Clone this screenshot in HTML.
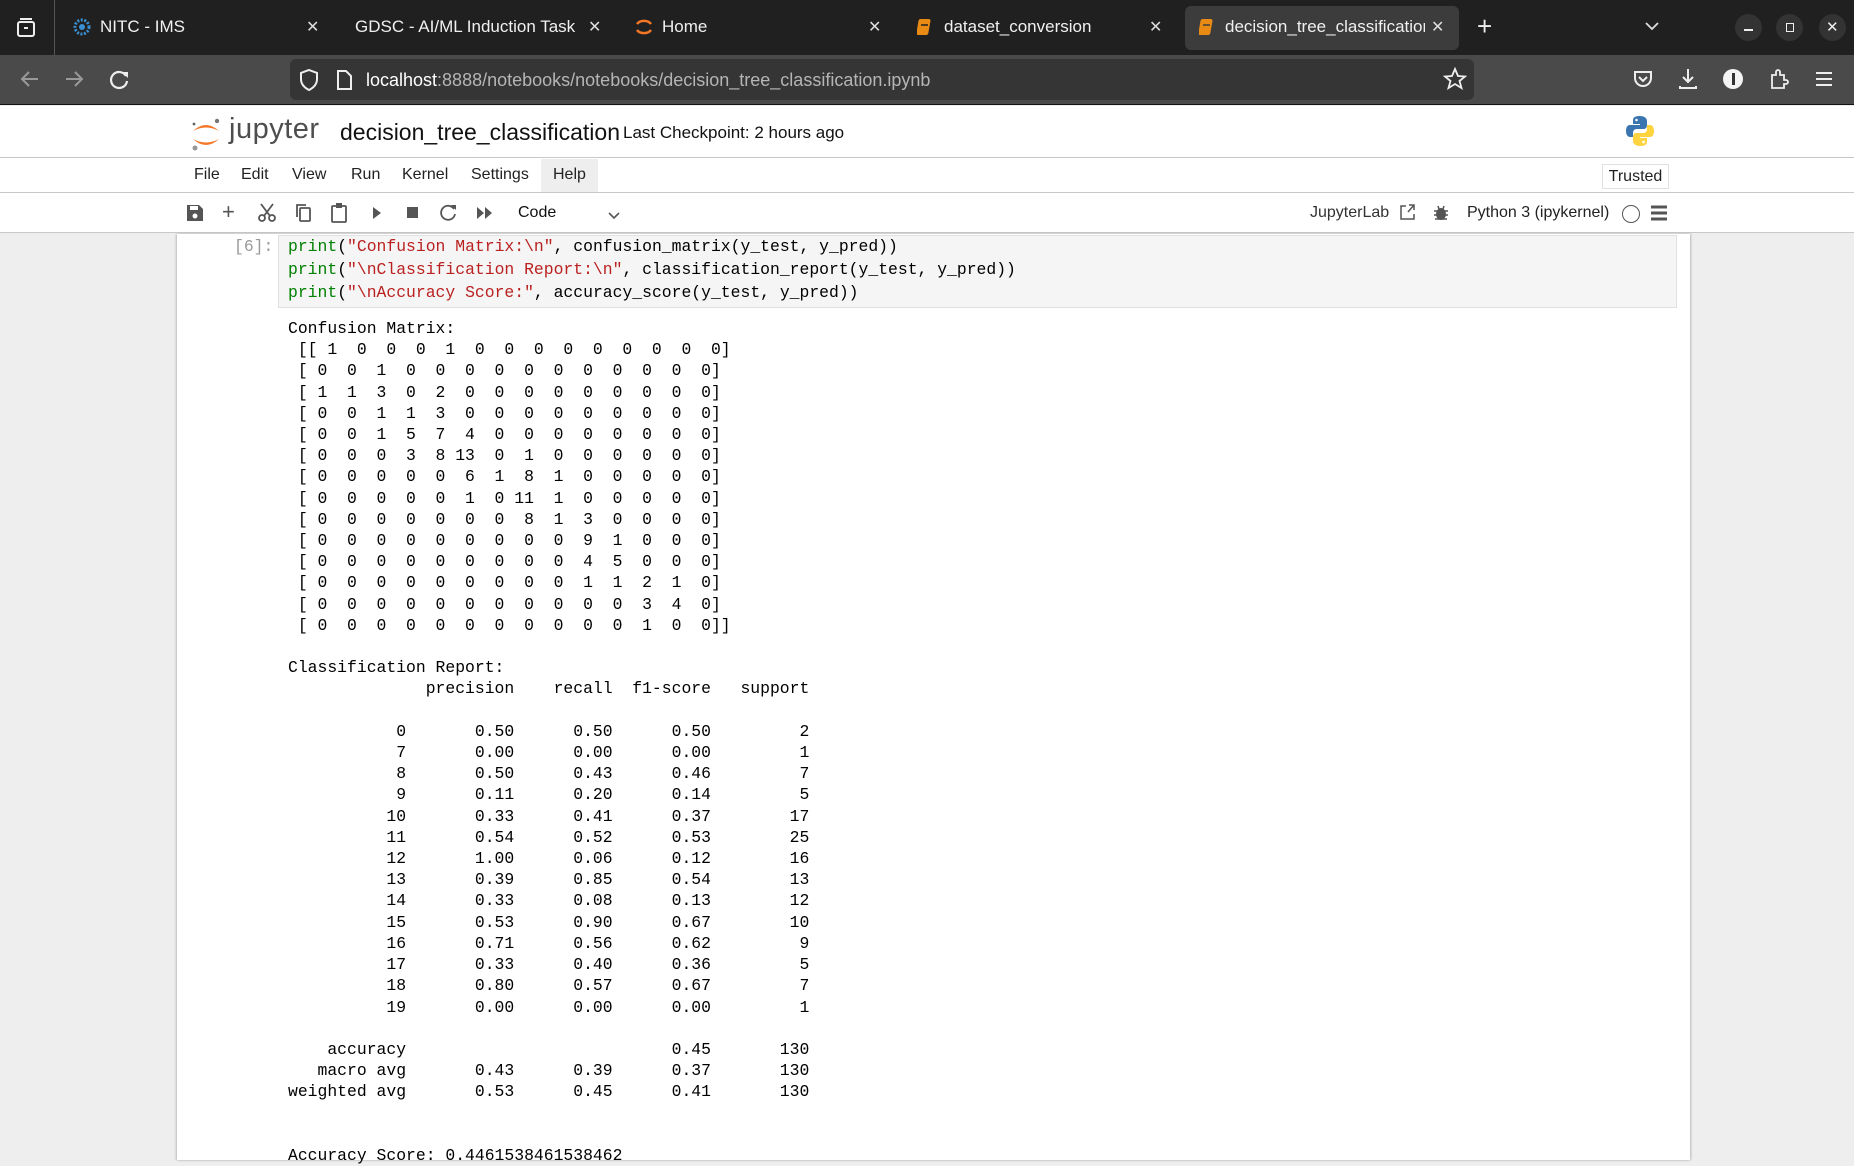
<!DOCTYPE html>
<html><head><meta charset="utf-8"><style>
*{margin:0;padding:0;box-sizing:border-box}
body{width:1854px;height:1160px;overflow:hidden;background:#eeeeee;font-family:"Liberation Sans",sans-serif;position:relative}
.a{position:absolute}
.tabbar{left:0;top:0;width:1854px;height:55px;background:#202020}
.tt{color:#f0f0f0;font-size:17px;top:17px;white-space:nowrap}
.cx{color:#ddd;font-size:16px;top:17px}
.nav{left:0;top:55px;width:1854px;height:50px;background:#4a4a4a;border-bottom:1px solid #111}
.url{left:290px;top:59px;width:1184px;height:41px;background:#353535;border-radius:6px}
.hdr{left:0;top:106px;width:1854px;height:52px;background:#fff;border-bottom:1px solid #c8c8c8}
.menu{left:0;top:158px;width:1854px;height:35px;background:#fff;border-bottom:1px solid #c8c8c8}
.mi{top:166px;font-size:16px;color:#222}
.tb{left:0;top:193px;width:1854px;height:40px;background:#fff;border-bottom:1px solid #c8c8c8}
.panel{left:177px;top:234px;width:1513px;height:926px;background:#fff;box-shadow:-1px 0 2px #bbb,1px 0 2px #bbb}
.mono{font-family:"Liberation Mono","DejaVu Sans Mono",monospace;font-size:16.4px;white-space:pre}
.g{color:#008000}.r{color:#ba2121}
</style></head><body>
<div class="a tabbar"></div>
<svg class="a" style="left:15px;top:17px" width="22" height="22" viewBox="0 0 22 22"><rect x="3" y="5" width="16" height="14" rx="2" fill="none" stroke="#eee" stroke-width="2"/><line x1="5" y1="2" x2="17" y2="2" stroke="#eee" stroke-width="2"/><rect x="9" y="10" width="4" height="2" fill="#eee"/></svg>
<div class="a" style="left:54px;top:0;width:1px;height:55px;background:#555"></div>
<svg class="a" style="left:72px;top:17px" width="20" height="20"><circle cx="10" cy="10" r="7" fill="none" stroke="#3a8fd0" stroke-width="3" stroke-dasharray="2 1.5"/><circle cx="10" cy="10" r="3" fill="#3a8fd0"/></svg>
<div class="a tt" style="left:100px">NITC - IMS</div><div class="a cx" style="left:306px">✕</div>
<div class="a tt" style="left:355px;width:228px;overflow:hidden">GDSC - AI/ML Induction Task</div><div class="a cx" style="left:588px">✕</div>
<svg class="a" style="left:634px;top:16px" width="20" height="22"><path d="M3 8 A8 6 0 0 1 17 8" fill="none" stroke="#f37726" stroke-width="2.5"/><path d="M3 14 A8 6 0 0 0 17 14" fill="none" stroke="#f37726" stroke-width="2.5"/></svg>
<div class="a tt" style="left:662px">Home</div><div class="a cx" style="left:868px">✕</div>
<svg class="a" style="left:917px;top:18px" width="16" height="18"><rect x="2" y="1" width="12" height="16" rx="2" fill="#e98a15" transform="skewX(-10)"/><line x1="4" y1="7" x2="11" y2="7" stroke="#202020" stroke-width="1.5"/></svg>
<div class="a tt" style="left:944px">dataset_conversion</div><div class="a cx" style="left:1149px">✕</div>
<div class="a" style="left:1185px;top:6px;width:274px;height:44px;background:#3c3c3c;border-radius:6px"></div>
<svg class="a" style="left:1199px;top:18px" width="16" height="18"><rect x="2" y="1" width="12" height="16" rx="2" fill="#e98a15" transform="skewX(-10)"/><line x1="4" y1="7" x2="11" y2="7" stroke="#3c3c3c" stroke-width="1.5"/></svg>
<div class="a tt" style="left:1225px;width:200px;overflow:hidden">decision_tree_classification</div><div class="a cx" style="left:1431px">✕</div>
<div class="a" style="left:1477px;top:11px;color:#eee;font-size:26px">+</div>
<svg class="a" style="left:1644px;top:20px" width="16" height="12"><path d="M2 3 L8 9 L14 3" fill="none" stroke="#ddd" stroke-width="1.8"/></svg>
<div class="a" style="left:1735px;top:14px;width:27px;height:27px;border-radius:50%;background:#333"></div>
<div class="a" style="left:1776px;top:14px;width:27px;height:27px;border-radius:50%;background:#333"></div>
<div class="a" style="left:1819px;top:14px;width:27px;height:27px;border-radius:50%;background:#333"></div>
<div class="a" style="left:1744px;top:29px;width:9px;height:1.5px;background:#eee"></div>
<div class="a" style="left:1786px;top:23px;width:8px;height:9px;border:1.5px solid #eee"></div>
<div class="a" style="left:1826px;top:18px;color:#eee;font-size:15px">✕</div>

<div class="a nav"></div>
<svg class="a" style="left:18px;top:68px" width="24" height="22"><path d="M20 11 H4 M11 4 L4 11 L11 18" fill="none" stroke="#999" stroke-width="2"/></svg>
<svg class="a" style="left:62px;top:68px" width="24" height="22"><path d="M4 11 H20 M13 4 L20 11 L13 18" fill="none" stroke="#999" stroke-width="2"/></svg>
<svg class="a" style="left:108px;top:68px" width="24" height="24"><path d="M18 8 A8 8 0 1 0 19 13" fill="none" stroke="#eee" stroke-width="2.2"/><path d="M14 4 L20 4 L20 10 Z" fill="#eee"/></svg>
<div class="a url"></div>
<svg class="a" style="left:298px;top:68px" width="22" height="24"><path d="M11 2 L19 5 V11 C19 17 15 20 11 22 C7 20 3 17 3 11 V5 Z" fill="none" stroke="#eee" stroke-width="2"/></svg>
<svg class="a" style="left:335px;top:69px" width="18" height="22"><path d="M3 2 H11 L16 7 V20 H3 Z" fill="none" stroke="#eee" stroke-width="2"/></svg>
<div class="a" style="left:366px;top:70px;font-size:18px;color:#fff;white-space:nowrap">localhost<span style="color:#b5b5b5">:8888/notebooks/notebooks/decision_tree_classification.ipynb</span></div>
<svg class="a" style="left:1443px;top:67px" width="24" height="24"><path d="M12 2 L15 9 L22 9.5 L16.5 14 L18.5 21 L12 17 L5.5 21 L7.5 14 L2 9.5 L9 9 Z" fill="none" stroke="#eee" stroke-width="1.8"/></svg>
<svg class="a" style="left:1632px;top:68px" width="22" height="22"><path d="M3 4 H19 V10 A8 8 0 0 1 3 10 Z" fill="none" stroke="#eee" stroke-width="2"/><path d="M7 9 L11 13 L15 9" fill="none" stroke="#eee" stroke-width="2"/></svg>
<svg class="a" style="left:1677px;top:67px" width="22" height="24"><path d="M11 2 V15 M6 10 L11 15 L16 10 M3 19 V21 H19 V19" fill="none" stroke="#eee" stroke-width="2"/></svg>
<div class="a" style="left:1723px;top:69px;width:20px;height:20px;border-radius:50%;background:#f4f4f4"></div>
<div class="a" style="left:1732px;top:73px;width:2.5px;height:12px;background:#333"></div>
<svg class="a" style="left:1768px;top:67px" width="22" height="24"><path d="M4 8 H8 V5 A2 2 0 0 1 12 5 V8 H16 V13 H18 A2 2 0 0 1 18 17 H16 V21 H4 Z" fill="none" stroke="#eee" stroke-width="1.8"/></svg>
<svg class="a" style="left:1814px;top:70px" width="20" height="18"><path d="M2 3 H18 M2 9 H18 M2 15 H18" stroke="#eee" stroke-width="2"/></svg>

<div class="a hdr"></div>
<svg class="a" style="left:189px;top:115px" width="34" height="38" viewBox="0 0 34 38"><path d="M4 16 Q17 4 30 16 Q17 9 4 16Z" fill="#f37726"/><path d="M4 24 Q17 36 30 24 Q17 31 4 24Z" fill="#f37726"/><circle cx="28" cy="6" r="2.2" fill="#767677"/><circle cx="6" cy="33" r="2.5" fill="#989798"/><circle cx="5" cy="9" r="1.4" fill="#616262"/></svg>
<div class="a" style="left:229px;top:113px;font-size:29px;color:#4e4e4e;letter-spacing:0.5px">jupyter</div>
<div class="a" style="left:340px;top:119px;font-size:23px;color:#111">decision_tree_classification</div>
<div class="a" style="left:623px;top:123px;font-size:17px;color:#111">Last Checkpoint: 2 hours ago</div>
<svg class="a" style="left:1625px;top:115px" width="30" height="32" viewBox="0 0 30 32"><path d="M15 1 C8 1 8 4 8 6 V9 H15 V10 H5 C2 10 1 13 1 16 C1 20 3 22 5 22 H8 V18 C8 15 10 14 12 14 H19 C21 14 22 12 22 10 V6 C22 3 19 1 15 1Z" fill="#3a75b0"/><path d="M15 31 C22 31 22 28 22 26 V23 H15 V22 H25 C28 22 29 19 29 16 C29 12 27 10 25 10 H22 V14 C22 17 20 18 18 18 H11 C9 18 8 20 8 22 V26 C8 29 11 31 15 31Z" fill="#fdd440"/><circle cx="11.5" cy="5" r="1.3" fill="#fff"/><circle cx="18.5" cy="27" r="1.3" fill="#fff"/></svg>

<div class="a menu"></div>
<div class="a" style="left:541px;top:159px;width:57px;height:33px;background:#eeeeee"></div>
<div class="a mi" style="left:194px">File</div>
<div class="a mi" style="left:241px">Edit</div>
<div class="a mi" style="left:292px">View</div>
<div class="a mi" style="left:351px">Run</div>
<div class="a mi" style="left:402px">Kernel</div>
<div class="a mi" style="left:471px">Settings</div>
<div class="a mi" style="left:553px">Help</div>
<div class="a" style="left:1602px;top:164px;width:67px;height:25px;border:1px solid #e0e0e0;font-size:16px;color:#222;text-align:center;line-height:23px">Trusted</div>

<div class="a tb"></div>
<svg class="a" style="left:186px;top:204px" width="18" height="18"><path d="M1 1 H13 L17 5 V17 H1 Z" fill="#555"/><rect x="4" y="2" width="8" height="4" fill="#fff"/><circle cx="9" cy="12" r="2.5" fill="#fff"/></svg>
<div class="a" style="left:222px;top:199px;font-size:22px;color:#555">+</div>
<svg class="a" style="left:258px;top:203px" width="18" height="20"><circle cx="4" cy="15" r="3" fill="none" stroke="#555" stroke-width="1.8"/><circle cx="14" cy="15" r="3" fill="none" stroke="#555" stroke-width="1.8"/><path d="M6 13 L15 1 M12 13 L3 1" stroke="#555" stroke-width="1.8"/></svg>
<svg class="a" style="left:295px;top:203px" width="18" height="20"><rect x="5" y="5" width="10" height="13" rx="1" fill="none" stroke="#555" stroke-width="1.8"/><path d="M2 14 V2 H11" fill="none" stroke="#555" stroke-width="1.8"/></svg>
<svg class="a" style="left:330px;top:202px" width="18" height="21"><rect x="2" y="4" width="14" height="16" rx="1" fill="none" stroke="#555" stroke-width="1.8"/><rect x="6" y="1" width="6" height="5" fill="#555"/></svg>
<svg class="a" style="left:371px;top:206px" width="12" height="14"><path d="M2 1 L10 7 L2 13Z" fill="#555"/></svg>
<div class="a" style="left:407px;top:207px;width:11px;height:11px;background:#555"></div>
<svg class="a" style="left:439px;top:203px" width="19" height="19"><path d="M15 6 A7 7 0 1 0 16 11" fill="none" stroke="#555" stroke-width="1.8"/><path d="M12 2 L17 2 L17 7Z" fill="#555"/></svg>
<svg class="a" style="left:476px;top:206px" width="18" height="14"><path d="M1 1 L8 7 L1 13Z M9 1 L16 7 L9 13Z" fill="#555"/></svg>
<div class="a" style="left:518px;top:204px;font-size:16px;color:#111">Code</div>
<svg class="a" style="left:608px;top:212px" width="12" height="9"><path d="M1 1 L6 6 L11 1" fill="none" stroke="#555" stroke-width="1.6"/></svg>
<div class="a" style="left:1310px;top:204px;font-size:16px;color:#333">JupyterLab</div>
<svg class="a" style="left:1399px;top:203px" width="17" height="18"><path d="M7 3 H2 V16 H15 V11 M9 9 L15 2 M10 2 H15 V7" fill="none" stroke="#555" stroke-width="1.5"/></svg>
<svg class="a" style="left:1433px;top:204px" width="16" height="17"><ellipse cx="8" cy="10" rx="5" ry="6" fill="#555"/><path d="M1 7 H15 M1 11 H15 M2 15 H14 M5 2 L6 5 M11 2 L10 5" stroke="#555" stroke-width="1.5"/></svg>
<div class="a" style="left:1467px;top:204px;font-size:16px;color:#222">Python 3 (ipykernel)</div>
<div class="a" style="left:1622px;top:205px;width:18px;height:18px;border:1.6px solid #555;border-radius:50%"></div>
<svg class="a" style="left:1651px;top:205px" width="16" height="16"><path d="M0 2 H16 M0 8 H16 M0 14 H16" stroke="#555" stroke-width="3"/></svg>

<div class="a panel"></div>
<div class="a mono" style="left:234px;top:236px;color:#999;line-height:22.8px">[6]:</div>
<div class="a" style="left:278px;top:235px;width:1399px;height:73px;background:#f5f5f5;border:1px solid #e0e0e0"></div>
<div class="a mono" style="left:288px;top:236px;line-height:22.8px;color:#000"><span class="g">print</span>(<span class="r">"Confusion Matrix:\n"</span>, confusion_matrix(y_test, y_pred))
<span class="g">print</span>(<span class="r">"\nClassification Report:\n"</span>, classification_report(y_test, y_pred))
<span class="g">print</span>(<span class="r">"\nAccuracy Score:"</span>, accuracy_score(y_test, y_pred))</div>
<div class="a mono" style="left:288px;top:318px;line-height:21.2px;color:#000">Confusion Matrix:
 [[ 1  0  0  0  1  0  0  0  0  0  0  0  0  0]
 [ 0  0  1  0  0  0  0  0  0  0  0  0  0  0]
 [ 1  1  3  0  2  0  0  0  0  0  0  0  0  0]
 [ 0  0  1  1  3  0  0  0  0  0  0  0  0  0]
 [ 0  0  1  5  7  4  0  0  0  0  0  0  0  0]
 [ 0  0  0  3  8 13  0  1  0  0  0  0  0  0]
 [ 0  0  0  0  0  6  1  8  1  0  0  0  0  0]
 [ 0  0  0  0  0  1  0 11  1  0  0  0  0  0]
 [ 0  0  0  0  0  0  0  8  1  3  0  0  0  0]
 [ 0  0  0  0  0  0  0  0  0  9  1  0  0  0]
 [ 0  0  0  0  0  0  0  0  0  4  5  0  0  0]
 [ 0  0  0  0  0  0  0  0  0  1  1  2  1  0]
 [ 0  0  0  0  0  0  0  0  0  0  0  3  4  0]
 [ 0  0  0  0  0  0  0  0  0  0  0  1  0  0]]

Classification Report:
              precision    recall  f1-score   support

           0       0.50      0.50      0.50         2
           7       0.00      0.00      0.00         1
           8       0.50      0.43      0.46         7
           9       0.11      0.20      0.14         5
          10       0.33      0.41      0.37        17
          11       0.54      0.52      0.53        25
          12       1.00      0.06      0.12        16
          13       0.39      0.85      0.54        13
          14       0.33      0.08      0.13        12
          15       0.53      0.90      0.67        10
          16       0.71      0.56      0.62         9
          17       0.33      0.40      0.36         5
          18       0.80      0.57      0.67         7
          19       0.00      0.00      0.00         1

    accuracy                           0.45       130
   macro avg       0.43      0.39      0.37       130
weighted avg       0.53      0.45      0.41       130


Accuracy Score: 0.4461538461538462</div>
</body></html>
